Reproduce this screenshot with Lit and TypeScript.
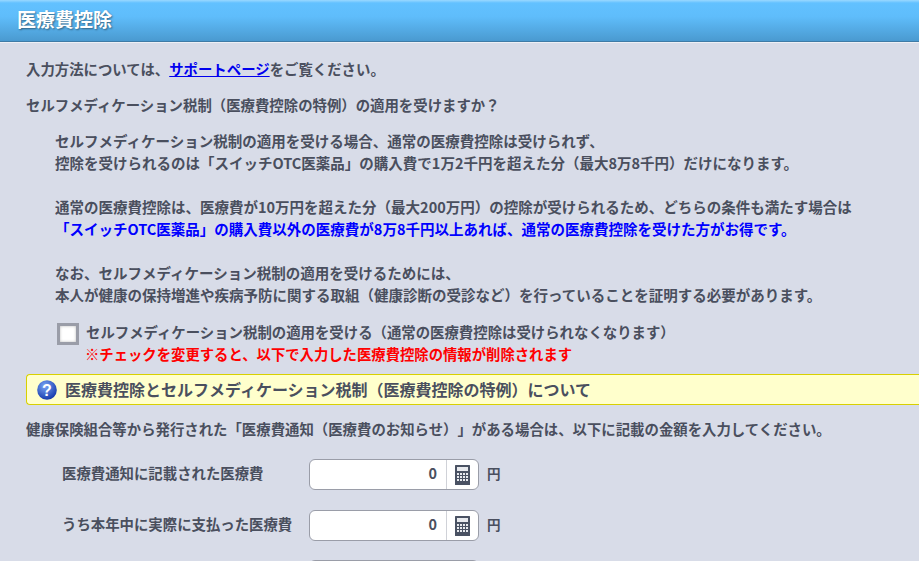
import { LitElement, html, css, svg } from "lit";
import { customElement } from "lit/decorators.js";

const calc = svg`<svg class="calc" width="15" height="20" viewBox="0 0 15 20">
  <rect width="15" height="20" rx="0.5" fill="#4a5263"/>
  <rect x="2" y="2" width="11" height="4" fill="#e8eaee"/>
  <g fill="#e8eaee">
    ${[8, 11, 14].flatMap((y) => [2, 5, 8, 11].map((x) => svg`<rect x=${x} y=${y} width="2" height="2"/>`))}
  </g>
</svg>`;

@customElement("app-root")
export class AppRoot extends LitElement {
  static styles = css`
    :host {
      display: block;
      width: 919px;
      height: 561px;
      overflow: hidden;
      background: #d8dce8;
      font-family: "Noto Sans CJK JP", "Noto Sans", sans-serif;
      font-size: 14.4px;
      font-weight: 700;
      color: #4a4f5e;
      line-height: 22px;
      text-spacing-trim: space-all;
    }
    header {
      height: 42px;
      box-sizing: border-box;
      border-bottom: 1px solid #3f7ba6;
      box-shadow: 0 1px 0 #eef0f5;
      background: linear-gradient(#9ad8ff 0, #62c1ff 3px, #5fbdfb 40%, #4a9ad0 100%);
      color: #fff;
      font-size: 19px;
      padding-left: 17px;
      line-height: 38px;
      text-shadow: 1px 1px 2px rgba(0, 0, 0, 0.45);
    }
    main {
      padding: 16px 0 0 26px;
    }
    p {
      margin: 0;
      white-space: nowrap;
    }
    a {
      color: #0000ee;
      text-decoration: underline;
    }
    .q {
      margin-top: 14px;
    }
    .info {
      margin: 14px 0 0 29px;
      font-size: 14.5px;
    }
    .gap {
      margin-top: 22px;
    }
    .blue {
      color: #0000ff;
    }
    .check {
      display: flex;
      gap: 7px;
      margin: 15px 0 0 31px;
    }
    .box {
      width: 22px;
      height: 22px;
      box-sizing: border-box;
      border: 3px solid #9a9da8;
      background: #fff;
      box-shadow: inset 0 0 3px #bbb;
      margin-top: 2px;
      flex: none;
    }
    .red {
      color: #ff0000;
      margin-left: -1px;
      font-size: 14.35px;
    }
    .note {
      display: flex;
      align-items: center;
      gap: 8px;
      height: 31px;
      box-sizing: border-box;
      margin-top: 9px;
      padding-left: 10px;
      border: 1px solid #d8d000;
      border-right: none;
      border-radius: 4px 0 0 4px;
      background: #ffffcc;
      font-size: 16px;
    }
    .note span {
      padding-bottom: 2px;
    }
    .lead {
      margin-top: 13px;
    }
    .row {
      display: flex;
      align-items: center;
      margin-top: 20px;
      height: 31px;
    }
    .lead + .row {
      margin-top: 19px;
    }
    .row:last-child {
      margin-top: 19px;
    }
    .row label {
      width: 283px;
      padding: 0 0 3px 36px;
      box-sizing: border-box;
      white-space: nowrap;
    }
    .input {
      display: flex;
      align-items: center;
      width: 170px;
      height: 31px;
      box-sizing: border-box;
      border: 1px solid #9a9da8;
      border-radius: 6px;
      background: #fff;
    }
    .val {
      flex: 1;
      text-align: right;
      padding: 0 9px 3px 0;
      color: #4a4f5e;
    }
    .btn {
      width: 31px;
      height: 100%;
      display: flex;
      align-items: center;
      justify-content: center;
      border-left: 1px solid #d0d2d8;
    }
    .yen {
      margin-left: 8px;
      padding-bottom: 3px;
      font-size: 13.5px;
    }
  `;

  private row(label: string, value = "0", unit = "円") {
    return html`<div class="row">
      <label>${label}</label>
      <div class="input"><span class="val">${value}</span><span class="btn">${calc}</span></div>
      <span class="yen">${unit}</span>
    </div>`;
  }

  render() {
    return html`
      <header>医療費控除</header>
      <main>
        <p>入力方法については、<a href="#">サポートページ</a>をご覧ください。</p>
        <p class="q">セルフメディケーション税制（医療費控除の特例）の適用を受けますか？</p>
        <div class="info">
          <p>セルフメディケーション税制の適用を受ける場合、通常の医療費控除は受けられず、</p>
          <p>控除を受けられるのは「スイッチOTC医薬品」の購入費で1万2千円を超えた分（最大8万8千円）だけになります。</p>
          <p class="gap">通常の医療費控除は、医療費が10万円を超えた分（最大200万円）の控除が受けられるため、どちらの条件も満たす場合は</p>
          <p class="blue">「スイッチOTC医薬品」の購入費以外の医療費が8万8千円以上あれば、通常の医療費控除を受けた方がお得です。</p>
          <p class="gap">なお、セルフメディケーション税制の適用を受けるためには、</p>
          <p>本人が健康の保持増進や疾病予防に関する取組（健康診断の受診など）を行っていることを証明する必要があります。</p>
        </div>
        <div class="check">
          <span class="box"></span>
          <div>
            <p>セルフメディケーション税制の適用を受ける（通常の医療費控除は受けられなくなります）</p>
            <p class="red">※チェックを変更すると、以下で入力した医療費控除の情報が削除されます</p>
          </div>
        </div>
        <div class="note">
          <svg width="20" height="20" viewBox="0 0 20 20">
            <defs>
              <radialGradient id="g" cx="40%" cy="30%" r="75%">
                <stop offset="0" stop-color="#7ba6f5" />
                <stop offset="1" stop-color="#0f34a8" />
              </radialGradient>
            </defs>
            <circle cx="10" cy="10" r="9.8" fill="url(#g)" />
            <text x="10" y="15.5" text-anchor="middle" font-family="Liberation Sans" font-size="16" font-weight="700" fill="#fff">?</text>
          </svg>
          <span>医療費控除とセルフメディケーション税制（医療費控除の特例）について</span>
        </div>
        <p class="lead">健康保険組合等から発行された「医療費通知（医療費のお知らせ）」がある場合は、以下に記載の金額を入力してください。</p>
        ${this.row("医療費通知に記載された医療費")}
        ${this.row("うち本年中に実際に支払った医療費")}
        ${this.row("", "", "")}
      </main>
    `;
  }
}
